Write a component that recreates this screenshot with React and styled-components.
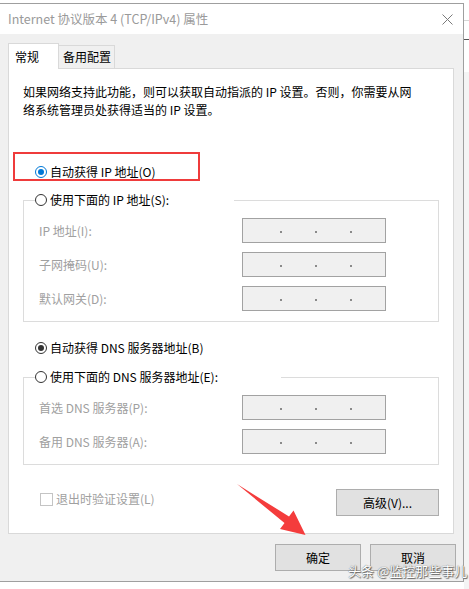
import React from 'react'
import styled, { createGlobalStyle } from 'styled-components'

const GlobalStyle = createGlobalStyle`
  html, body {
    margin: 0;
    padding: 0;
    background: #ffffff;
  }
  body {
    font-family: "Noto Sans CJK SC", "Noto Sans", sans-serif;
    font-size: 12px;
    color: #000;
  }
`

const Screen = styled.div`
  position: relative;
  width: 469px;
  height: 589px;
  overflow: hidden;
  display: flex;
  flex-direction: column;
`

const Desk = styled.div`
  display: flex;
  align-items: flex-start;
`

const Window = styled.div`
  width: 463px;
  margin-top: 3px;
  border-top: 1px solid #9f9f9f;
  border-right: 1px solid #9f9f9f;
  border-bottom: 1px solid #9f9f9f;
  background: #f0f0f0;
`

const TitleBar = styled.div`
  height: 30px;
  background: #fff;
  display: flex;
  align-items: center;
  justify-content: space-between;
  padding: 0 10px 0 8px;
`

const Title = styled.div`
  color: #9a9a9a;
  font-size: 12.5px;
  line-height: 18px;
  margin-top: -1px;
`

const Body = styled.div`
  padding: 9px 7px 10px 8px;
`

const TabRow = styled.div`
  display: flex;
  align-items: flex-end;
`

const Tab = styled.div`
  position: relative;
  z-index: 1;
  box-sizing: border-box;
  height: ${p => (p.$active ? '26px' : '23px')};
  margin-bottom: ${p => (p.$active ? '-1px' : '0')};
  width: ${p => p.$w}px;
  padding-left: ${p => (p.$active ? '6px' : '4px')};
  padding-top: ${p => (p.$active ? '4px' : '2px')};
  background: ${p => (p.$active ? '#fff' : '#f0f0f0')};
  border: 1px solid #d9d9d9;
  border-bottom: none;
  border-left: ${p => (p.$active ? '1px solid #d9d9d9' : 'none')};
  line-height: 18px;
  font-size: 12px;
`

const Panel = styled.div`
  width: 446px;
  box-sizing: border-box;
  background: #fff;
  border: 1px solid #d9d9d9;
  padding: 14px 14px 17px 14px;
  display: flex;
  flex-direction: column;
`

const Desc = styled.p`
  margin: 0;
  line-height: 18px;
  font-size: 12px;
`

const RadioRow = styled.div`
  display: flex;
  align-items: center;
  height: 18px;
  padding-left: 12px;
  margin-top: ${p => p.$mt || 0}px;
`

const RadioLabel = styled.span`
  display: inline-flex;
  align-items: center;
  gap: 3px;
  height: 18px;
  line-height: 18px;
  font-size: 12px;
`

const RadioDot = styled.span`
  box-sizing: border-box;
  width: 12px;
  height: 12px;
  border-radius: 50%;
  border: 1px solid ${p => p.$color || '#333'};
  background: #fff;
  display: inline-flex;
  align-items: center;
  justify-content: center;
  flex-shrink: 0;
  &::after {
    content: '';
    display: ${p => (p.$checked ? 'block' : 'none')};
    width: 6px;
    height: 6px;
    border-radius: 50%;
    background: ${p => p.$color || '#333'};
  }
`

const Group = styled.fieldset`
  margin: ${p => p.$mt || 0}px 0 0 0;
  padding: 9px 0 10px 0;
  border: 1px solid #dcdcdc;
  min-width: 0;
  display: flex;
  flex-direction: column;
  gap: 9px;
`

const Legend = styled.legend`
  padding: 0;
  margin-left: 11px;
  width: ${p => p.$w}px;
  height: 18px;
`

const FieldRow = styled.div`
  display: flex;
  align-items: center;
  height: 25px;
  padding-left: 15px;
`

const FieldLabel = styled.span`
  width: 203px;
  color: #a0a0a0;
  font-size: 12px;
  line-height: 18px;
`

const IpBox = styled.div`
  box-sizing: border-box;
  width: 144px;
  height: 25px;
  background: #f0f0f0;
  border: 1px solid #a2a2a2;
  display: flex;
  align-items: center;
  padding: 2px 0 0 37px;
  gap: 33px;
`

const IpDot = styled.span`
  width: 2px;
  height: 2px;
  background: #8a8a8a;
`

const BottomRow = styled.div`
  display: flex;
  justify-content: space-between;
  align-items: flex-start;
  margin-top: 24px;
`

const CheckLabel = styled.span`
  display: inline-flex;
  align-items: center;
  gap: 3px;
  margin: 1px 0 0 17px;
  color: #a0a0a0;
  line-height: 18px;
  font-size: 12px;
`

const CheckBox = styled.span`
  box-sizing: border-box;
  width: 13px;
  height: 13px;
  border: 1px solid #c4c4c4;
  background: #fff;
`

const Button = styled.button`
  box-sizing: border-box;
  width: ${p => p.$w}px;
  height: 27px;
  background: #e1e1e1;
  border: 1px solid #adadad;
  border-radius: 0;
  font-family: inherit;
  font-size: 12px;
  line-height: 18px;
  color: #000;
  padding: 0;
  cursor: default;
`

const ButtonRow = styled.div`
  display: flex;
  justify-content: flex-end;
  gap: 9px;
  margin-top: 10px;
`

const SideStrip = styled.div`
  flex: 1;
  height: 589px;
  display: flex;
  flex-direction: column;
  background: #fff;
`

const StripLine = styled.div`
  height: 1px;
  background: ${p => p.$c};
  margin-top: ${p => p.$mt}px;
`

const StripFill = styled.div`
  flex: 1;
  margin-top: 32px;
  background: #f4f4f4;
`

const Below = styled.div`
  flex: 1;
  display: flex;
  padding-left: 53px;
`

const BelowTab = styled.div`
  width: 8px;
  border-left: 1px solid #8c8c8c;
  background: #e9e9e9;
`

const Highlight = styled.div`
  position: absolute;
  left: 13px;
  top: 152px;
  width: 187px;
  height: 29px;
  box-sizing: border-box;
  border: 2px solid #ef3b3b;
  pointer-events: none;
`

const ArrowLayer = styled.svg`
  position: absolute;
  left: 0;
  top: 0;
  pointer-events: none;
`

const Watermark = styled.div`
  position: absolute;
  left: 348px;
  top: 563px;
  font-size: 13px;
  line-height: 16px;
  color: #fff;
  text-shadow: 0 0 1px #444, 1px 1px 1px #666;
  white-space: nowrap;
`

function Radio({ checked, color, children }) {
  return (
    <RadioLabel>
      <RadioDot $checked={checked} $color={color} />
      {children}
    </RadioLabel>
  )
}

function IpField({ label }) {
  return (
    <FieldRow>
      <FieldLabel>{label}</FieldLabel>
      <IpBox>
        <IpDot />
        <IpDot />
        <IpDot />
      </IpBox>
    </FieldRow>
  )
}

const ipFields = ['IP 地址(I):', '子网掩码(U):', '默认网关(D):']
const dnsFields = ['首选 DNS 服务器(P):', '备用 DNS 服务器(A):']

export default function App() {
  return (
    <>
      <GlobalStyle />
      <Screen>
        <Desk>
          <Window>
            <TitleBar>
              <Title>Internet 协议版本 4 (TCP/IPv4) 属性</Title>
              <svg width="11" height="11" viewBox="0 0 11 11">
                <path d="M0.5 0.5 L10.5 10.5 M10.5 0.5 L0.5 10.5" stroke="#7a7a7a" strokeWidth="1" />
              </svg>
            </TitleBar>
            <Body>
              <TabRow>
                <Tab $active $w={51}>常规</Tab>
                <Tab $w={56}>备用配置</Tab>
              </TabRow>
              <Panel>
                <Desc>
                  如果网络支持此功能，则可以获取自动指派的 IP 设置。否则，你需要从网
                  <br />
                  络系统管理员处获得适当的 IP 设置。
                </Desc>
                <RadioRow $mt={44}>
                  <Radio checked color="#0078d7">自动获得 IP 地址(O)</Radio>
                </RadioRow>
                <Group $mt={10}>
                  <Legend $w={199}>
                    <Radio>使用下面的 IP 地址(S):</Radio>
                  </Legend>
                  {ipFields.map(f => (
                    <IpField key={f} label={f} />
                  ))}
                </Group>
                <RadioRow $mt={17}>
                  <Radio checked color="#333">自动获得 DNS 服务器地址(B)</Radio>
                </RadioRow>
                <Group $mt={11}>
                  <Legend $w={246}>
                    <Radio>使用下面的 DNS 服务器地址(E):</Radio>
                  </Legend>
                  {dnsFields.map(f => (
                    <IpField key={f} label={f} />
                  ))}
                </Group>
                <BottomRow>
                  <CheckLabel>
                    <CheckBox />
                    退出时验证设置(L)
                  </CheckLabel>
                  <Button $w={103}>高级(V)...</Button>
                </BottomRow>
              </Panel>
              <ButtonRow>
                <Button $w={86}>确定</Button>
                <Button $w={86}>取消</Button>
              </ButtonRow>
            </Body>
          </Window>
          <SideStrip>
            <StripLine $c="#d6d6d6" $mt={20} />
            <StripLine $c="#555" $mt={18} />
            <StripFill />
          </SideStrip>
        </Desk>
        <Below>
          <BelowTab />
        </Below>
        <Highlight />
        <ArrowLayer width="469" height="589" viewBox="0 0 469 589">
          <polygon
            points="237,484 289,516.5 293.5,510.5 305.5,535 280,529 284.5,523"
            fill="#f43c3c"
          />
        </ArrowLayer>
        <Watermark>头条 @监控那些事儿</Watermark>
      </Screen>
    </>
  )
}
